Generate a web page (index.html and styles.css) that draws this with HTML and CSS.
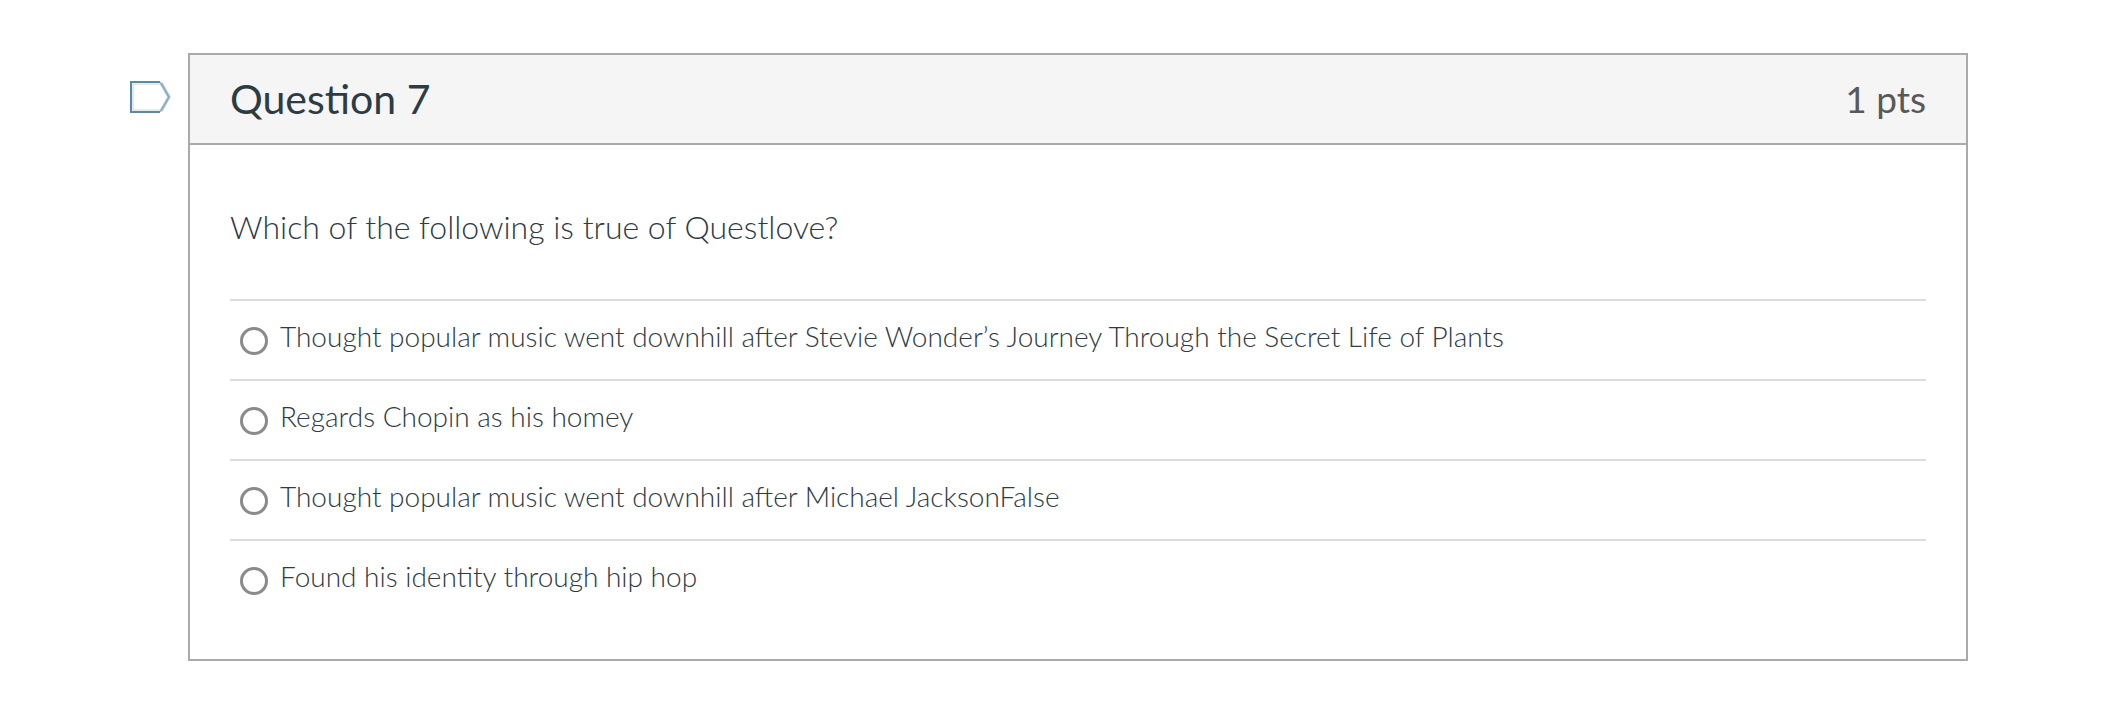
FILE: index.html
```
<!DOCTYPE html>
<html lang="en">
<head>
    <meta charset="UTF-8">
    <meta name="viewport" content="width=device-width, initial-scale=1.0">
    <title>Question 7</title>
    <link rel="stylesheet" href="styles.css">
</head>
<body>
    <main class="quiz">
        <button type="button" class="flag" aria-label="Flag question">
            <svg width="42" height="34" viewBox="0 0 42 34" fill="none" stroke-width="2">
                <path d="M31 2H2V32H31" stroke="#5b89a3"/>
                <path d="M32 3L40 17L32 31" stroke="#a3c0cf" stroke-width="3"/>
                <path d="M31 2L40 17L31 32" stroke="#7fa5b9" stroke-width="1"/>
                <path d="M31 4H4V30H31" stroke="#c3d6e0" stroke-width="1"/>
            </svg>
        </button>
        <form class="question">
            <header class="question-header">
                <h1 class="question-name">Question 7</h1>
                <span class="question-points">1 pts</span>
            </header>
            <fieldset class="question-body">
                <legend class="question-text">Which of the following is true of Questlove?</legend>
                <div class="answer">
                    <input type="radio" id="answer1" name="answer" value="1">
                    <label for="answer1">Thought popular music went downhill after Stevie Wonder’s Journey Through the Secret Life of Plants</label>
                </div>
                <div class="answer">
                    <input type="radio" id="answer2" name="answer" value="2">
                    <label for="answer2">Regards Chopin as his homey</label>
                </div>
                <div class="answer">
                    <input type="radio" id="answer3" name="answer" value="3">
                    <label for="answer3">Thought popular music went downhill after Michael JacksonFalse</label>
                </div>
                <div class="answer">
                    <input type="radio" id="answer4" name="answer" value="4">
                    <label for="answer4">Found his identity through hip hop</label>
                </div>
            </fieldset>
        </form>
    </main>
</body>
</html>
```

FILE: styles.css
```
* {
    margin: 0;
    padding: 0;
    box-sizing: border-box;
}

body {
    background-color: #fff;
    color: #2d3b45;
    font-family: Lato, sans-serif;
}

.quiz {
    display: flex;
    align-items: flex-start;
    gap: 17px;
    padding: 53px 160px 53px 129px;
}

.flag {
    margin-top: 27px;
    border: none;
    background: none;
    cursor: pointer;
}

.flag svg {
    display: block;
}

.question {
    flex: 1;
    border: 2px solid #aaa;
}

.question-header {
    display: flex;
    justify-content: space-between;
    align-items: center;
    padding: 20px 40px;
    background-color: #f5f5f5;
    border-bottom: 2px solid #aaa;
    line-height: 48px;
}

.question-name {
    font-size: 41px;
    font-weight: 400;
}

.question-points {
    color: #595959;
    font-size: 37px;
}

.question-body {
    border: none;
    padding: 58px 40px 40px;
}

.question-text {
    float: left;
    width: 100%;
    margin-bottom: 48px;
    font-size: 32px;
    font-weight: 300;
    line-height: 48px;
}

.answer {
    display: flex;
    clear: both;
    gap: 12px;
    padding: 17px 10px 24px;
    border-top: 2px solid #ddd;
}

.answer input {
    width: 28px;
    height: 28px;
    margin-top: 9px;
    appearance: none;
    border: 3px solid #8a8a8e;
    border-radius: 50%;
    background-color: #fff;
}

.answer input:checked {
    background-color: #0374b5;
}

.answer label {
    font-size: 28px;
    font-weight: 300;
    line-height: 36px;
}
```
